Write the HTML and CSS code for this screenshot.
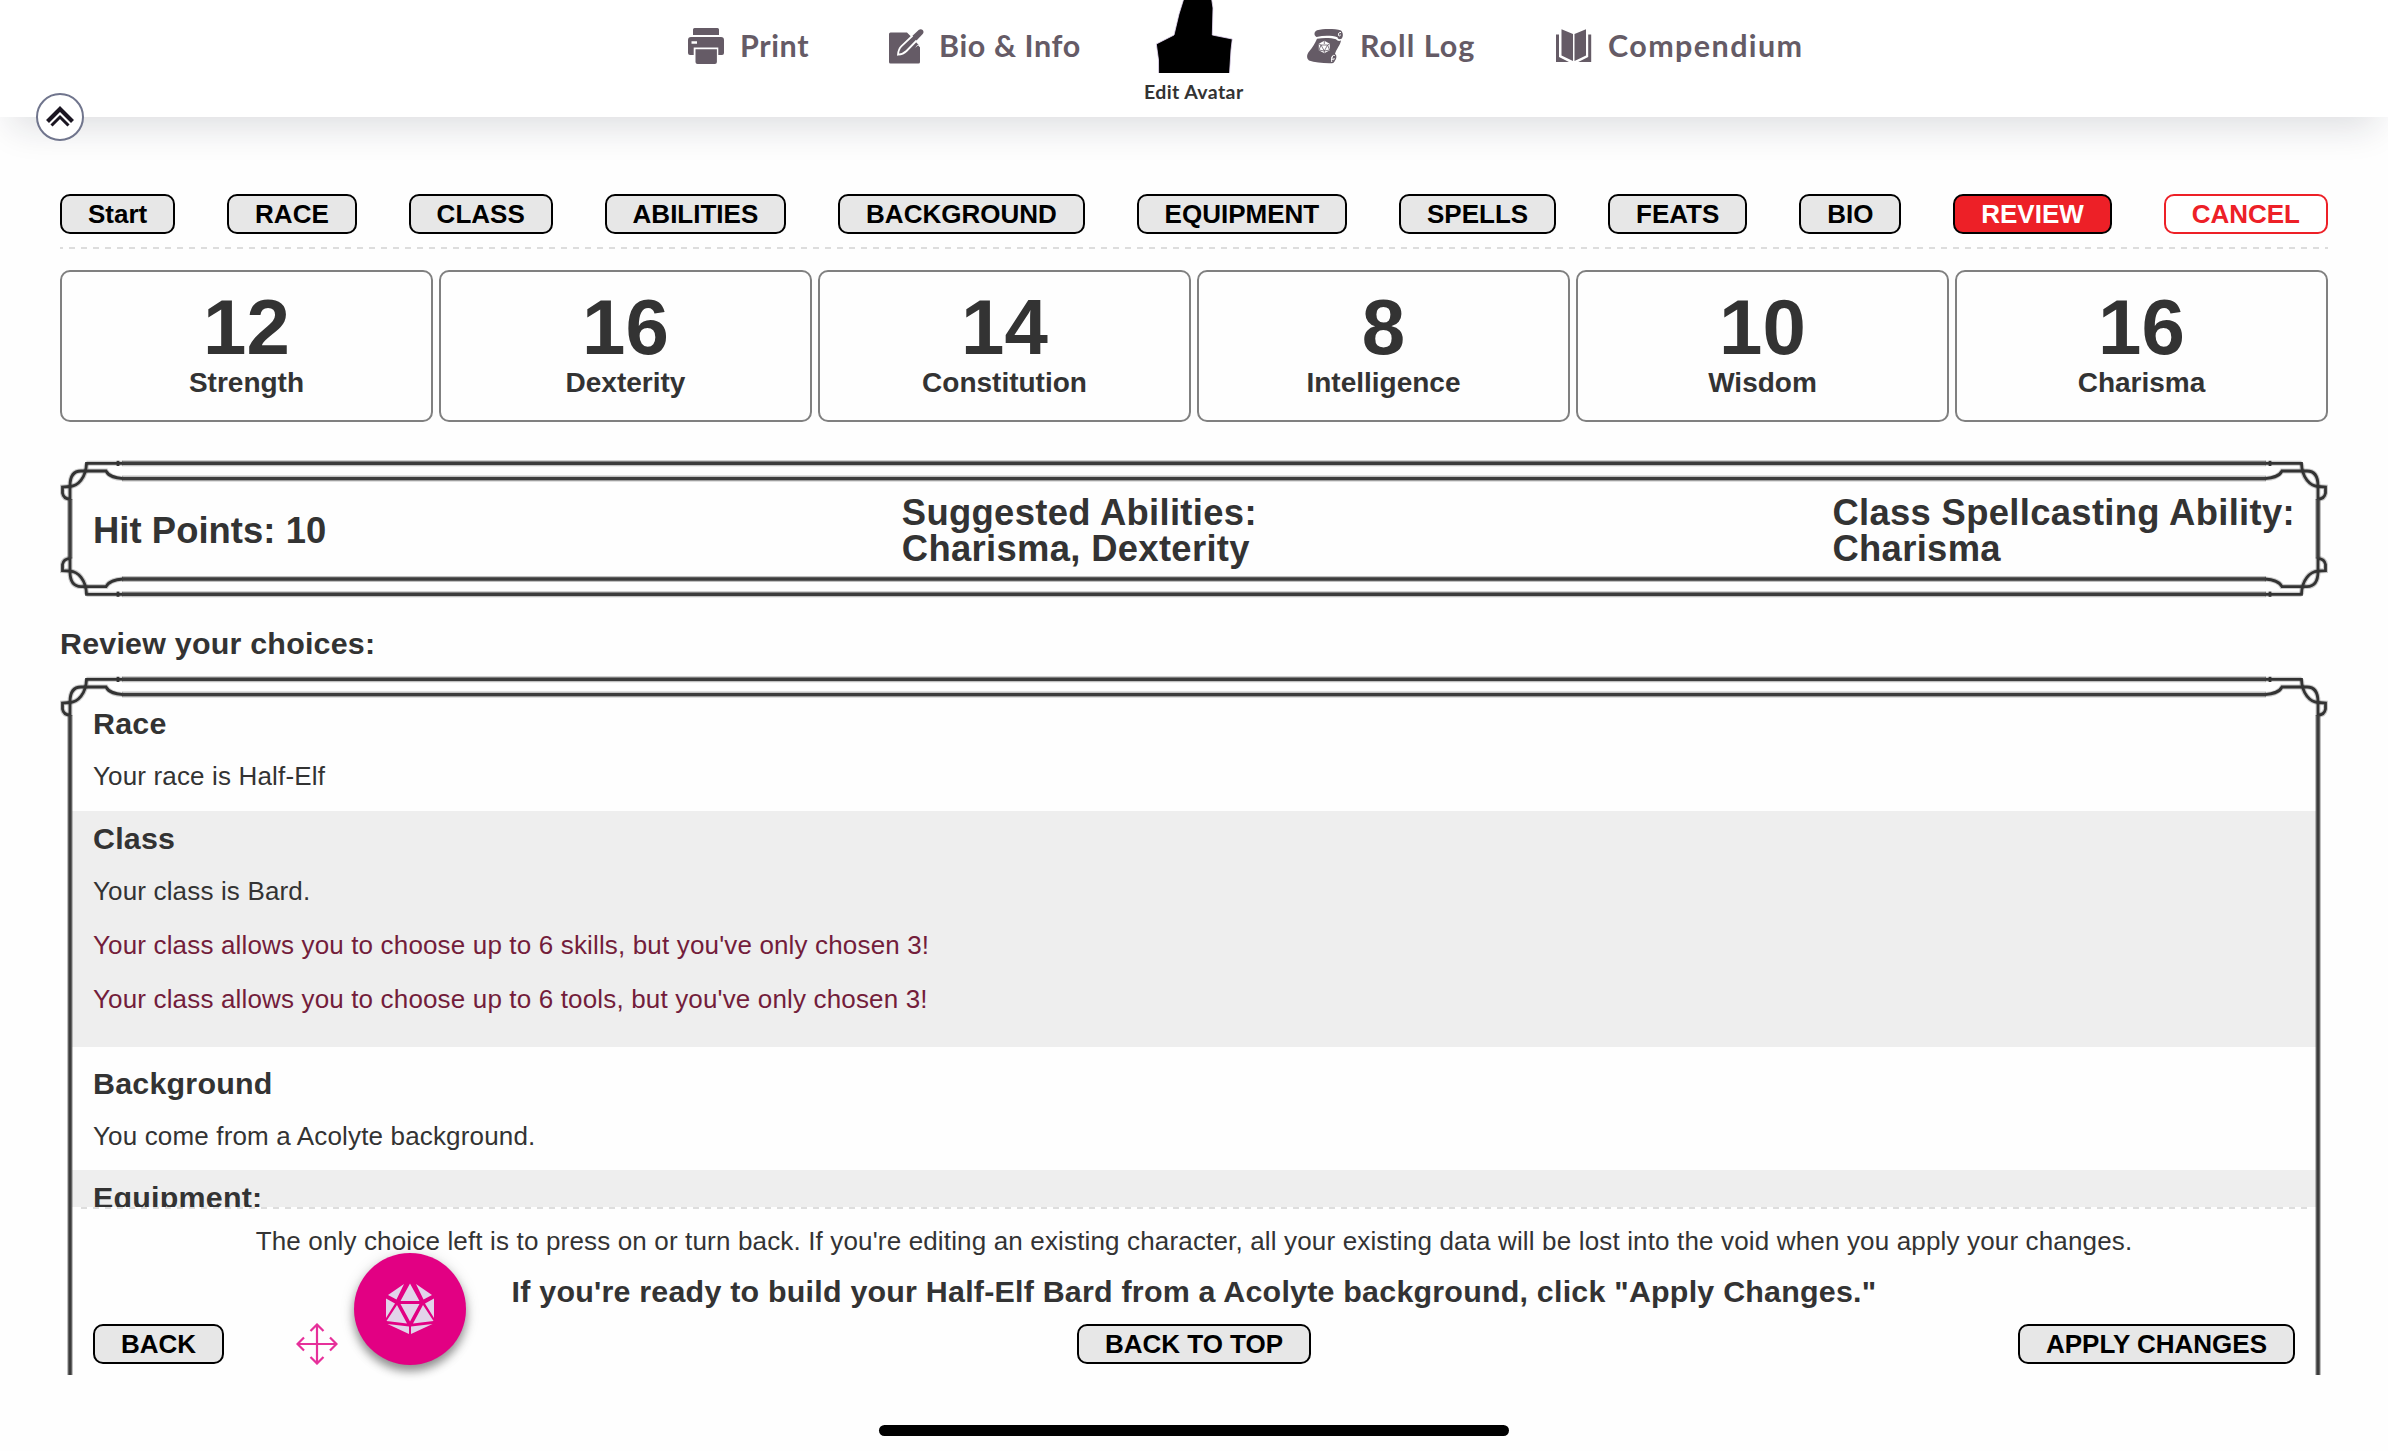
FILE: index.html
```html
<!DOCTYPE html>
<html lang="en">
<head>
<meta charset="utf-8">
<title>Character Builder</title>
<link rel="stylesheet" href="styles.css">
</head>
<body>
<svg width="0" height="0" class="defs">
  <defs>
    <g id="corner" fill="none">
      <g class="halo"><path d="M63 3.3H26.5"/><path d="M63 18.6C56 18 49 17 46 11H21C14 11 10 16 10 26V40"/><path d="M26.5 3.3C26 18 18 26 10 26.500L2.500 27V33C3 36 5 39 10 39"/></g>
      <path class="ink" d="M63 3.3H26.5C26 18 18 26 10 26.500L2.500 27V33C3 36 5 39 10 39"/>
      <path class="ink" d="M63 18.600C56 18 49 17 46 11H21C14 11 10 16 10 26V40"/>
      <path class="ink" d="M58 0.800V6"/>
    </g>
  </defs>
</svg>

<header class="header">
  <nav class="nav">
    <a class="nav-item print">
      <svg width="36" height="36" viewBox="0 0 36 36" fill="#655b66"><path d="M6.500 0h23a1.500 1.500 0 0 1 1.500 1.500V7H5V1.500A1.500 1.500 0 0 1 6.500 0z"/><path fill-rule="evenodd" d="M3 9h30a3 3 0 0 1 3 3v13a2 2 0 0 1-2 2h-3.700v-7.500H5.700V27H2a2 2 0 0 1-2-2V12a3 3 0 0 1 3-3zm.5 4.300v2.400H9v-2.400z"/><path d="M7.500 21.300h21.400V34a2 2 0 0 1-2 2H9.500a2 2 0 0 1-2-2z"/></svg>
      <span>Print</span>
    </a>
    <a class="nav-item bio">
      <svg width="35" height="35" viewBox="0 0 35 35"><path fill="#655b66" d="M1.500 3.500H18l3 3 10 11V33a1.500 1.500 0 0 1-1.500 1.500h-28A1.500 1.500 0 0 1 0 33V5a1.500 1.500 0 0 1 1.500-1.500z"/><path fill="#fff" d="M18.500 3l3.200 3.200L26 2V0h-8zM26 19l5.200-4.500V18.500l-2.700-2.700z"/><path fill="#655b66" stroke="#fff" stroke-width="1.800" d="M28.500 2L12.500 17.200Q9.300 20.300 9 25.700 14.300 25.300 17.500 22L33 6z"/><path fill="#655b66" d="M23.500 6.700L29.600 1Q31.800-.7 33.700 1q1.600 1.800 0 4L27.500 11.500z"/></svg>
      <span>Bio &amp; Info</span>
    </a>
    <a class="avatar">
      <svg width="80" height="73" viewBox="0 0 80 73"><path fill="#000" stroke="#eadcf8" stroke-width=".8" d="M30-2H57.500L59 8 58.300 35 78.300 39 77 50 75.500 74H4.600L4.500 60 2.300 44 20 35 25 14z"/></svg>
      <span>Edit Avatar</span>
    </a>
    <a class="nav-item roll">
      <svg width="36" height="35" viewBox="0 0 36 35"><path fill="#655b66" d="M10 1.300C17-.4 28-.2 34 1.500c2.500 2.500 2.300 6.500.5 8.300-1.800 1-4 .2-4-1.500C25 6.500 17 6.300 9.500 8 6.500 6.500 7 2.500 10 1.300z"/><path fill="#655b66" d="M10 9.800c7-1.300 14-1 19 .5 1.500 1.700 3 2 5 1.200-.8 5-4.500 8-6 13.500 2 1 1.700 4.500 0 6.500-.5 1.700-1.600 2.600-3 2.700C17 34.500 8 33.500 2 31.500-1 29-.2 25 2.500 22 6 18 8 14.500 10 9.800z"/><g fill="none" stroke="#fff" stroke-width="1"><path d="M34 3.500c-2-.5-2.800 1-2.500 3 .8 1 2 .5 1.800-1M27.800 26.500c-2-.7-3 1-2.800 3.500.8 1.600 2.500.8 2-1"/><path d="M26 26.500c-1.800 2-1.700 4-1.200 6.500"/></g><path fill="#fff" d="M17.300 11.800l5.500 3v6.500l-5.500 3-5.500-3v-6.500z"/><path fill="none" stroke="#655b66" stroke-width=".8" d="M17.300 12v3M14 16h6.600l-3.300 6zM12 15l2 1-2 5 5.300 1 5.300-1-2-5 2-1M17.300 22v2"/></svg>
      <span>Roll Log</span>
    </a>
    <a class="nav-item comp">
      <svg width="36" height="34" viewBox="0 0 36 34" fill="#655b66"><path d="M5.500.3L17 5v27L5.500 26.500zM30 .3L18.500 5v27L30 26.500z"/><path d="M0 5.500h3V28l10 5H0zM35.200 5.500h-3V28l-10 5h13z"/></svg>
      <span>Compendium</span>
    </a>
  </nav>
  <button class="collapse" aria-label="Collapse">
    <svg width="28" height="24" viewBox="0 0 28 24" fill="none" stroke="#1b1622"><path stroke-width="4.200" d="M1.500 16.500L14 4l12.500 12.500"/><path stroke-width="3" d="M5.500 20.500L14 12l8.500 8.500"/></svg>
  </button>
</header>

<main class="main">
  <nav class="steps">
    <button class="btn">Start</button><button class="btn">RACE</button><button class="btn">CLASS</button><button class="btn">ABILITIES</button><button class="btn">BACKGROUND</button><button class="btn">EQUIPMENT</button><button class="btn">SPELLS</button><button class="btn">FEATS</button><button class="btn">BIO</button><button class="btn current">REVIEW</button><button class="btn cancel">CANCEL</button>
  </nav>
  <div class="dash"></div>

  <section class="scores">
    <div class="score"><b>12</b><span>Strength</span></div>
    <div class="score"><b>16</b><span>Dexterity</span></div>
    <div class="score"><b>14</b><span>Constitution</span></div>
    <div class="score"><b>8</b><span>Intelligence</span></div>
    <div class="score"><b>10</b><span>Wisdom</span></div>
    <div class="score"><b>16</b><span>Charisma</span></div>
  </section>

  <section class="frame summary">
    <svg class="frame-art" width="2268" height="138" viewBox="0 0 2268 138">
      <use href="#corner"/><use href="#corner" transform="translate(2268 0) scale(-1 1)"/>
      <use href="#corner" transform="translate(0 137.600) scale(1 -1)"/><use href="#corner" transform="translate(2268 137.600) scale(-1 -1)"/>
      <path class="rule-halo" d="M62 3.300H2206M62 18.600H2206M62 119H2206M62 134.300H2206M10 39V98.600M2258 39V98.600"/>
      <path class="rule" d="M62 3.300H2206M62 18.600H2206M62 119H2206M62 134.300H2206M10 39V98.600M2258 39V98.600"/>
    </svg>
    <div class="hp">Hit Points: 10</div>
    <div>Suggested Abilities:<br>Charisma, Dexterity</div>
    <div>Class Spellcasting Ability:<br>Charisma</div>
  </section>

  <h3 class="review-title">Review your choices:</h3>

  <section class="frame review">
    <svg class="frame-art" width="2268" height="699" viewBox="0 0 2268 699">
      <use href="#corner"/><use href="#corner" transform="translate(2268 0) scale(-1 1)"/>
      <path class="rule-halo" d="M62 3.300H2206M62 18.600H2206M10 39V699M2258 39V699"/>
      <path class="rule" d="M62 3.300H2206M62 18.600H2206M10 39V699M2258 39V699"/>
    </svg>
    <div class="choices">
      <section class="choice race"><h3>Race</h3><p>Your race is Half-Elf</p></section>
      <section class="choice class shaded"><h3>Class</h3><p>Your class is Bard.</p>
        <p class="warn">Your class allows you to choose up to 6 skills, but you've only chosen 3!</p>
        <p class="warn">Your class allows you to choose up to 6 tools, but you've only chosen 3!</p></section>
      <section class="choice background"><h3>Background</h3><p>You come from a Acolyte background.</p></section>
      <section class="choice shaded"><h3>Equipment:</h3></section>
    </div>
    <footer class="footer">
      <div class="dash"></div>
      <p>The only choice left is to press on or turn back. If you're editing an existing character, all your existing data will be lost into the void when you apply your changes.</p>
      <h3>If you're ready to build your Half-Elf Bard from a Acolyte background, click "Apply Changes."</h3>
      <div class="actions"><button class="btn">BACK</button><button class="btn">BACK TO TOP</button><button class="btn">APPLY CHANGES</button></div>
    </footer>
  </section>
</main>

<svg class="move" width="42" height="42" viewBox="0 0 42 42" fill="none" stroke="#e6309a" stroke-width="2.200"><path d="M21 1.500V40.500M1.500 21H40.500M14.500 8L21 1.500 27.500 8M14.500 34L21 40.500 27.500 34M8 14.500L1.500 21 8 27.500M34 14.500L40.500 21 34 27.500"/></svg>
<button class="dice" aria-label="Roll dice">
  <svg width="50" height="52" viewBox="0 0 50 52" fill="#e2d4ea"><path d="M25 .5L34.500 18h-19zM19 1L11.500 16.500 3 12zM31 1l7.500 15.500L47 12zM1 15.500L10 20.500 1 35zM49 15.500L40 20.500 49 35zM15.500 21h19L25 38.500zM12 22L22 40.500 1.500 38zM38 22L28 40.500 48.500 38zM2.500 41L24 43.500V51zM47.500 41L26 43.500V51z"/></svg>
</button>
<div class="home-indicator"></div>
</body>
</html>
```
FILE: styles.css
```css
* { box-sizing: border-box; }
body {
  margin: 0;
  height: 1451px;
  overflow: hidden;
  position: relative;
  background: #fefefe;
  color: #333;
  font: 26px/30px "Liberation Sans", Arial, sans-serif;
}
h3, p { margin: 0; }
h3 { font-size: 30.42px; line-height: 36px; letter-spacing: .22px; }
p { letter-spacing: .155px; }
button { font: inherit; margin: 0; padding: 0; }
.defs { position: absolute; }

/* Top bar */
.header {
  position: relative;
  height: 117px;
  background: #fff;
  box-shadow: 0 22px 36px -12px rgba(19, 31, 53, .14);
}
.nav { display: flex; padding-left: 688px; font-family: Lato, sans-serif; }
.nav-item {
  display: flex;
  align-items: flex-start;
  padding-top: 28px;
  color: #655b66;
  font-weight: 700;
  font-size: 30.5px;
  line-height: 34px;
  letter-spacing: .6px;
  white-space: nowrap;
}
.nav-item svg { flex: none; }
.nav-item.print { width: 201px; gap: 16px; }
.nav-item.bio { width: 251px; gap: 15px; }
.nav-item.roll { width: 249px; gap: 17px; letter-spacing: 1px; }
.nav-item.comp { gap: 16px; letter-spacing: 1.4px; }
.nav-item.bio svg, .nav-item.roll svg, .nav-item.comp svg { margin-top: 1px; }
.avatar {
  width: 167px;
  display: flex;
  flex-direction: column;
  padding-left: 4px;
  font-weight: 700;
  font-size: 19.5px;
  line-height: 24px;
  letter-spacing: .4px;
  white-space: nowrap;
}
.avatar svg { margin-left: 10px; }
.avatar span { margin-top: 7px; }
.collapse {
  position: absolute;
  left: 36px;
  top: 93px;
  width: 48px;
  height: 48px;
  display: flex;
  align-items: center;
  justify-content: center;
  border: 2px solid #70758d;
  border-radius: 50%;
  background: #fff;
}

/* Builder */
.main { padding: 77px 60px 0; }
.steps { display: flex; justify-content: space-between; }
.btn {
  height: 40px;
  padding: 1px 26px 0;
  border: 2px solid #000;
  border-radius: 10px;
  background: #e7e7e7;
  color: #000;
  font-weight: 700;
  line-height: 35px;
  white-space: nowrap;
}
.btn.current { background: #ed2027; color: #fff; }
.btn.cancel { background: #fff; color: #ed2027; border-color: #ed2027; }
.dash {
  height: 2px;
  background: repeating-linear-gradient(90deg, #ddd 0 6px, transparent 6px 12px) -3px 0;
}
.steps + .dash { margin-top: 13px; }

.scores {
  display: grid;
  grid-template-columns: repeat(6, 1fr);
  gap: 6px;
  margin-top: 21px;
}
.score {
  height: 152px;
  padding-top: 15px;
  border: 2px solid #808080;
  border-radius: 10px;
  display: flex;
  flex-direction: column;
  align-items: center;
  font-weight: 700;
}
.score b { font-size: 78px; line-height: 80px; }
.score span { font-size: 28px; line-height: 32px; }

.frame { position: relative; }
.frame-art { position: absolute; left: 0; top: 0; overflow: visible; pointer-events: none; }
.halo { stroke: #333; stroke-opacity: .25; stroke-width: 5; }
.ink { stroke: #333; stroke-width: 2.8; }
.rule-halo { fill: none; stroke: #333; stroke-opacity: .3; stroke-width: 6; }
.rule { fill: none; stroke: #3c3c3c; stroke-width: 3.4; }

.summary {
  height: 138px;
  margin-top: 38px;
  padding: 3px 33px 0;
  display: flex;
  align-items: center;
  justify-content: space-between;
  font-weight: 700;
  font-size: 36.4px;
  line-height: 36px;
  letter-spacing: .33px;
}
.summary .hp { letter-spacing: .05px; }
.review-title { margin-top: 27px; }
.review { height: 699px; margin-top: 15px; }
.choices { height: 531px; padding: 20px 12px 0; overflow: hidden; }
.choice { padding: 9px 21px 0; }
.choice h3 { margin-bottom: 20px; }
.choice p { margin-bottom: 24px; }
.choice.race { height: 115px; }
.choice.class { height: 236px; }
.choice.background { height: 123px; padding-top: 18px; }
.shaded { background: #eee; }
.warn { color: #731d3b; }

.footer { padding: 0 33px; text-align: center; white-space: nowrap; }
.footer .dash { margin: 0 -12px; background-position: 0 0; }
.footer p { margin-top: 17px; }
.footer h3 { margin-top: 17px; }
.actions { display: grid; grid-template-columns: 1fr auto 1fr; margin-top: 15px; }
.actions .btn:first-child { justify-self: start; }
.actions .btn:last-child { justify-self: end; }

/* Floating controls */
.move { position: absolute; left: 296px; top: 1323px; }
.dice {
  position: absolute;
  left: 354px;
  top: 1253px;
  width: 112px;
  height: 112px;
  display: flex;
  align-items: center;
  justify-content: center;
  border: 0;
  border-radius: 50%;
  background: #e20083;
  box-shadow: 0 6px 10px rgba(0, 0, 0, .4), 0 2px 16px rgba(0, 0, 0, .12);
}
.home-indicator {
  position: absolute;
  left: 879px;
  top: 1425px;
  width: 630px;
  height: 11px;
  border-radius: 6px;
  background: #000;
}
```
